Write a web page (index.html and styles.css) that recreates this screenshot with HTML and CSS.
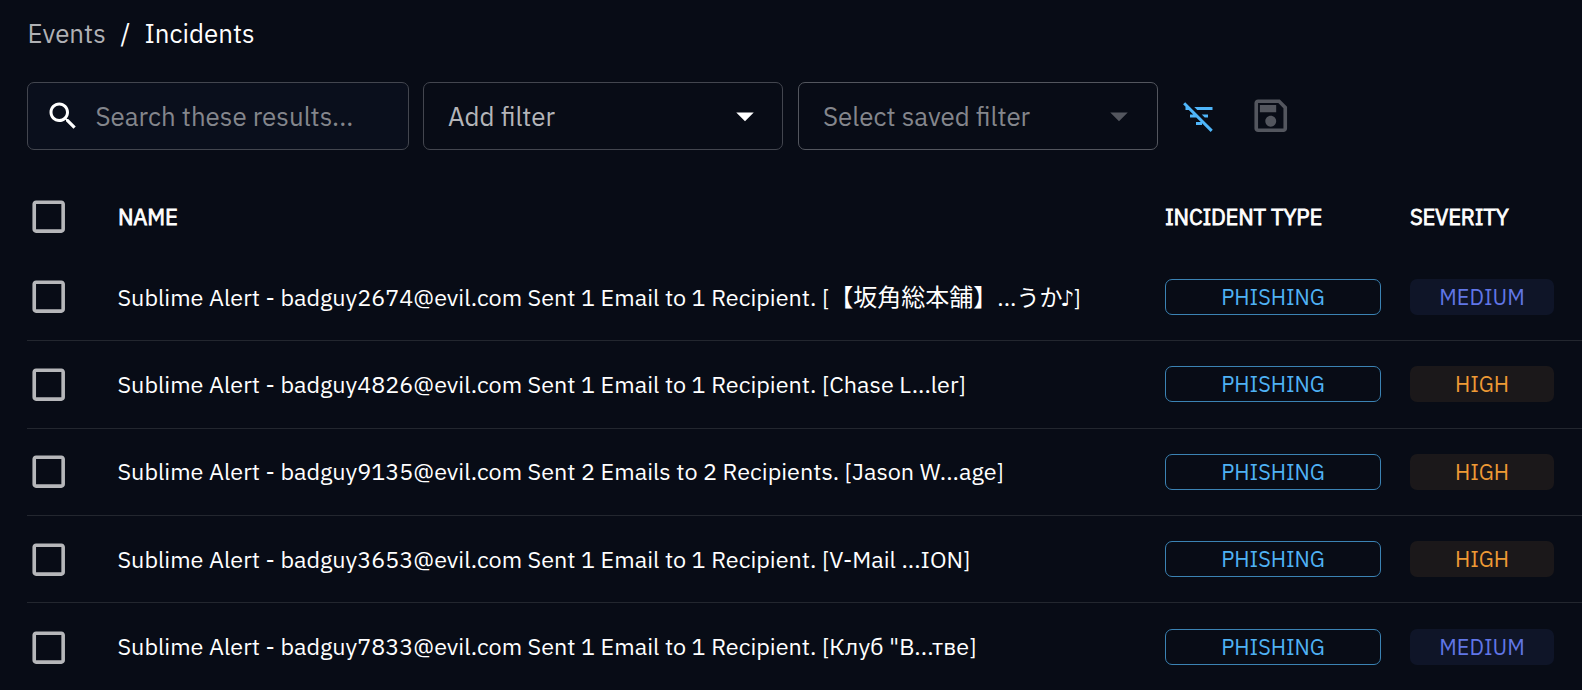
FILE: index.html
```
<!DOCTYPE html>
<html lang="en">
<head>
<meta charset="utf-8">
<title>Incidents</title>
<link rel="stylesheet" href="styles.css">
</head>
<body>
<svg class="sprite" aria-hidden="true">
  <symbol id="box" viewBox="0 0 24 24"><path d="M19 5v14H5V5h14m0-2H5c-1.1 0-2 .9-2 2v14c0 1.1.9 2 2 2h14c1.1 0 2-.9 2-2V5c0-1.1-.9-2-2-2z"/></symbol>
  <symbol id="arrow" viewBox="0 0 24 24"><path d="M7 10l5 5 5-5z"/></symbol>
</svg>
<nav class="crumbs">
  <span class="crumb-link">Events</span><span class="crumb-sep">/</span><span class="crumb-current">Incidents</span>
</nav>
<div class="toolbar">
  <div class="field search">
    <svg class="search-icon" viewBox="0 0 24 24"><path d="M15.5 14h-.79l-.28-.27C15.41 12.59 16 11.11 16 9.5 16 5.91 13.09 3 9.5 3S3 5.91 3 9.5 5.91 16 9.5 16c1.61 0 3.09-.59 4.23-1.57l.27.28v.79l5 4.99L20.49 19l-4.99-5zm-6 0C7.01 14 5 11.99 5 9.5S7.01 5 9.5 5 14 7.01 14 9.5 11.99 14 9.5 14z"/></svg>
    <span class="search-text">Search these results...</span>
  </div>
  <div class="field select">
    <span class="add-text">Add filter</span>
    <svg class="arrow"><use href="#arrow"/></svg>
  </div>
  <div class="field select saved">
    <span class="saved-text">Select saved filter</span>
    <svg class="arrow"><use href="#arrow"/></svg>
  </div>
  <svg class="filter-off" viewBox="0 0 24 24"><path d="M10.83 8H21V6H8.83l2 2zm5 5H18v-2h-4.17l2 2zM14 16.83V18h-4v-2h3.17l-3-3H6v-2h2.17l-3-3H3V6h.17L1.39 4.22 2.8 2.81l18.38 18.38-1.41 1.41L14 16.83z"/></svg>
  <svg class="save" viewBox="0 0 24 24"><path d="M17 3H5c-1.11 0-2 .9-2 2v14c0 1.1.89 2 2 2h14c1.1 0 2-.9 2-2V7l-4-4zm2 16H5V5h11.17L19 7.83V19zm-7-7c-1.66 0-3 1.34-3 3s1.34 3 3 3 3-1.34 3-3-1.34-3-3-3zM6 6h9v4H6z"/></svg>
</div>
<div class="table">
  <div class="row head">
    <svg class="check"><use href="#box"/></svg>
    <span class="h-name">NAME</span><span class="h-type">INCIDENT TYPE</span><span class="h-sev">SEVERITY</span>
  </div>
  <div class="row">
    <svg class="check"><use href="#box"/></svg>
    <span class="name n1">Sublime Alert - badguy2674@evil.com Sent 1 Email to 1 Recipient. [<span class="cjk">【坂角総本舗】</span>...<span class="cjk kana">うか</span><span class="note">♪</span>]</span>
    <span class="chip type">PHISHING</span><span class="chip medium">MEDIUM</span>
  </div>
  <div class="row">
    <svg class="check"><use href="#box"/></svg>
    <span class="name n2">Sublime Alert - badguy4826@evil.com Sent 1 Email to 1 Recipient. [Chase L...ler]</span>
    <span class="chip type">PHISHING</span><span class="chip high">HIGH</span>
  </div>
  <div class="row">
    <svg class="check"><use href="#box"/></svg>
    <span class="name n3">Sublime Alert - badguy9135@evil.com Sent 2 Emails to 2 Recipients. [Jason W...age]</span>
    <span class="chip type">PHISHING</span><span class="chip high">HIGH</span>
  </div>
  <div class="row">
    <svg class="check"><use href="#box"/></svg>
    <span class="name n4">Sublime Alert - badguy3653@evil.com Sent 1 Email to 1 Recipient. [V-Mail ...ION]</span>
    <span class="chip type">PHISHING</span><span class="chip high">HIGH</span>
  </div>
  <div class="row">
    <svg class="check"><use href="#box"/></svg>
    <span class="name n5">Sublime Alert - badguy7833@evil.com Sent 1 Email to 1 Recipient. [<span class="cyr">Клуб "В...тве</span>]</span>
    <span class="chip type">PHISHING</span><span class="chip medium">MEDIUM</span>
  </div>
</div>
</body>
</html>
```
FILE: styles.css
```
* { box-sizing: border-box; }
html, body { height: 100%; }
body {
  margin: 0;
  overflow: hidden;
  background: #080c16;
  color: #fff;
  font-family: "IBM Plex Sans", "Noto Sans", "Noto Sans CJK JP", sans-serif;
  font-size: 26px;
  white-space: nowrap;
}
svg { display: block; fill: currentColor; flex: none; }
.sprite { display: none; }

.crumbs { display: flex; height: 82px; padding: 16px 0 0 27.5px; line-height: 34px; font-size: 25.9px; }
.crumb-link { width: 93px; color: #b0b1b5; }
.crumb-sep { width: 24px; }

.toolbar { display: flex; align-items: center; height: 68px; padding-left: 27px; }
.field {
  display: flex;
  align-items: center;
  height: 68px;
  border: 1px solid #43464f;
  border-radius: 7px;
  font-size: 25.9px;
}
.search { width: 382px; margin-right: 14px; padding-left: 17px; background: #0a0f1c; }
.search-icon { width: 36px; height: 36px; margin-right: 14.5px; margin-top: -1px; }
.search-text { color: #84868c; }
.select { width: 360px; margin-right: 15px; padding: 0 16px 0 24px; justify-content: space-between; }
.add-text { color: #b4b5b9; }
.saved { border-color: #53565e; margin-right: 23px; padding-right: 17px; }
.saved-text { color: #84868c; }
.arrow { width: 42px; height: 42px; margin-top: -1px; }
.saved .arrow { color: #53565e; }
.filter-off { width: 36px; height: 36px; color: #4fb6fa; }
.save { width: 43.5px; height: 43.5px; margin-left: 31.5px; color: #53565e; }

.table { padding: 30px 0 0 27px; }
.row {
  display: grid;
  grid-template-columns: 91px 1047px 245px 144px;
  align-items: center;
  height: 87.4px;
  border-bottom: 1px solid #23272f;
  font-size: 23.4px;
}
.name { margin: -1px 0 0 -0.5px; height: 30px; line-height: 30px; }
.n1 { margin-top: 0; }
.n5 { margin-top: -2px; }
.cjk { font-family: "Noto Sans CJK JP", sans-serif; font-size: 24px; line-height: 1; text-spacing-trim: space-all; }
.kana { font-size: 23px; }
.note { font-family: "DejaVu Sans", sans-serif; font-size: 22px; line-height: 1; margin: 0 -1px 0 -2px; }
.cyr { letter-spacing: 0.15px; }
.head { height: 73.8px; border: 0; font-size: 22px; letter-spacing: -0.2px; -webkit-text-stroke: 0.8px #fff; }
.head span { margin: -1px 0 0; }
.row:last-child { border: 0; }
.check { width: 43.4px; height: 43.4px; margin-top: 0.4px; color: #b6b7ba; }
.chip {
  display: flex;
  align-items: center;
  justify-content: center;
  height: 36px;
  border-radius: 7px;
  font-size: 21.6px;
}
.type { width: 216px; border: 1px solid #3b83b4; color: #4fb2f5; }
.medium { background: #0f1528; color: #6076e6; }
.high { background: #1b181a; color: #ee9a35; }
```
